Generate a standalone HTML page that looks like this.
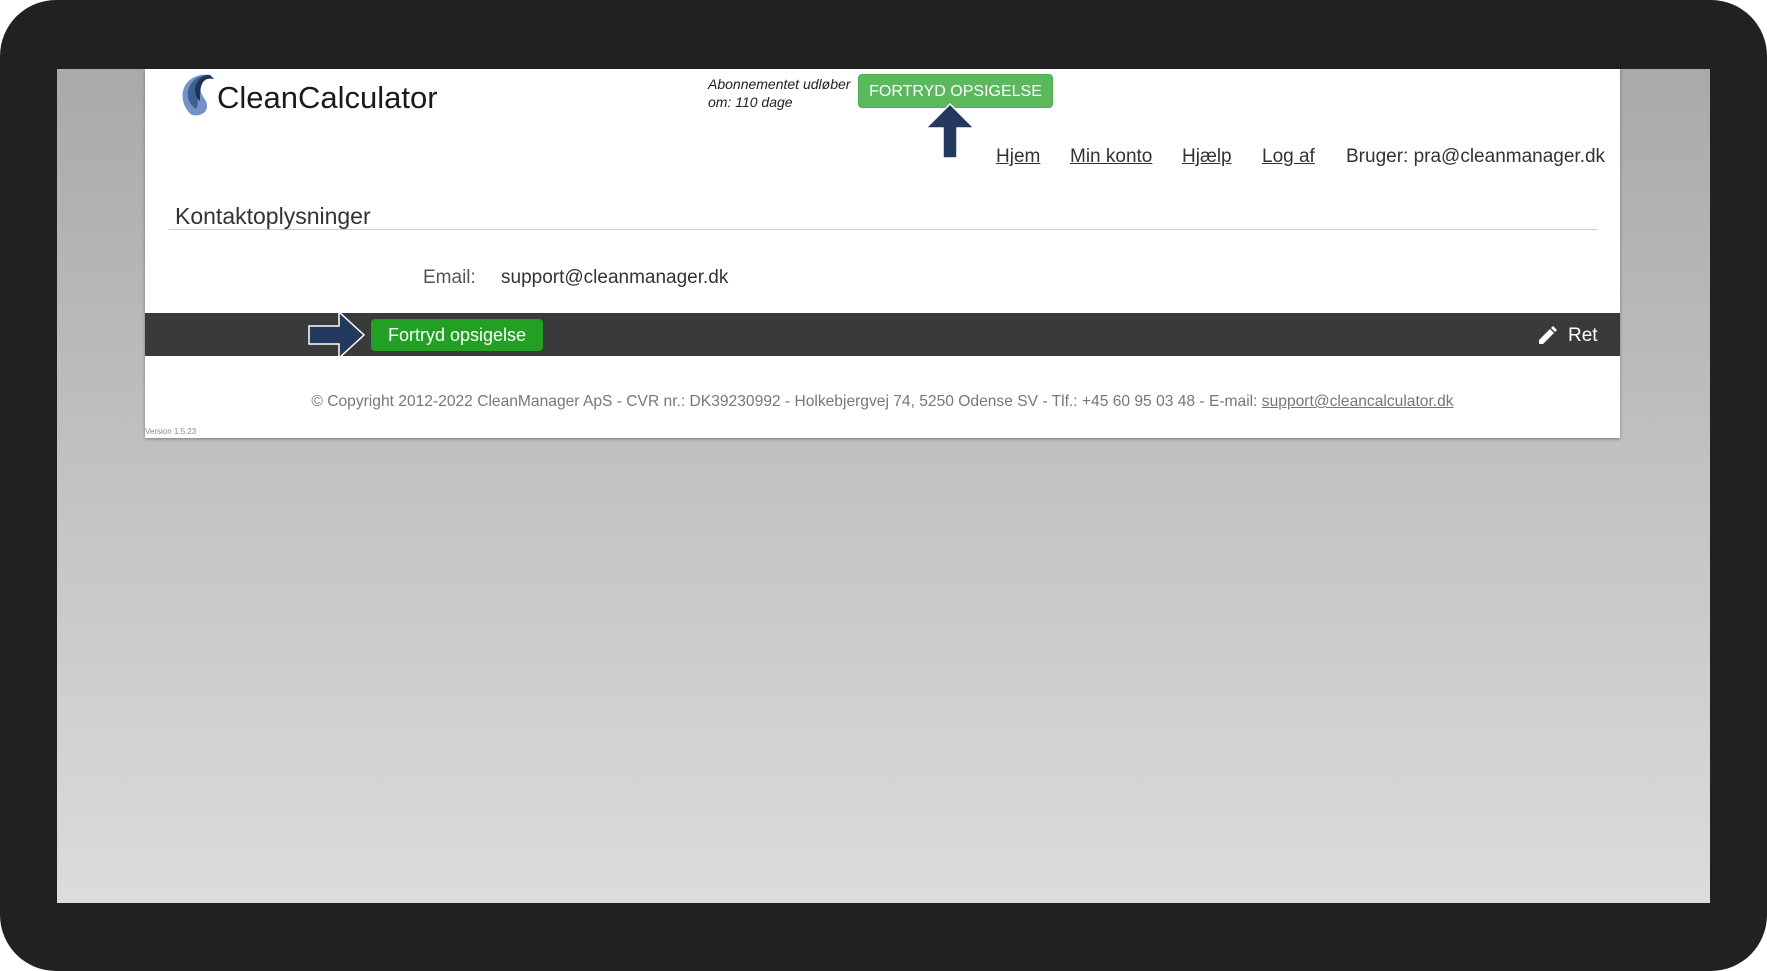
<!DOCTYPE html>
<html><head><meta charset="utf-8"><style>
*{margin:0;padding:0;box-sizing:border-box}
body{width:1767px;height:971px;background:#fff;position:relative;overflow:hidden;font-family:"Liberation Sans",sans-serif}
.frame{position:absolute;left:0;top:0;width:1767px;height:971px;background:#222122;border-radius:56px}
.gray{position:absolute;left:57px;top:69px;width:1653px;height:834px;background:linear-gradient(#a9a9a9,#dcdcdc)}
.card{position:absolute;left:145px;top:69px;width:1475px;height:369px;background:#fff;box-shadow:0 1px 3px rgba(0,0,0,.35)}
.a{position:absolute;white-space:nowrap}
.nav a{color:#333;text-decoration:underline;font-size:19px}
</style></head><body>
<div class="frame"></div>
<div class="gray"></div>
<div class="card"></div>
<svg class="a" style="left:180px;top:73px" width="36" height="44" viewBox="0 0 36 44">
<path d="M30 2 C18 0 6 6 3 18 C1 28 6 38 12 42 C22 44 30 38 26 28 C22 22 18 16 22 8 C24 5 28 4 34 6 Z" fill="#7393c8"/>
<path d="M30 2 C20 1 10 8 8 18 C7 26 10 32 16 36 C20 30 16 22 18 14 C20 8 26 5 34 6 Z" fill="#3f5f93"/>
<path d="M30 2 C22 2 16 8 15 16 C15 22 17 26 20 28 C20 20 20 12 24 8 C27 5 30 5 34 6 Z" fill="#1d3354"/>
</svg>
<div class="a" style="left:217px;top:80px;font-size:31px;color:#1a1a1a;font-weight:300">CleanCalculator</div>
<div class="a" style="left:708px;top:75px;font-size:14px;font-style:italic;color:#222;line-height:18px">Abonnementet udløber<br>om: 110 dage</div>
<div class="a" style="left:858px;top:74px;width:195px;height:34px;background:#5cb85c;border:1px solid #4cae4c;border-radius:4px;color:#fff;font-size:16px;text-align:center;line-height:34px">FORTRYD OPSIGELSE</div>
<svg class="a" style="left:924px;top:102px" width="52" height="58" viewBox="0 0 52 58"><path d="M26 2 L50 26 L33 26 L33 56 L19 56 L19 26 L2 26 Z" fill="#233a5e" stroke="#fff" stroke-width="1.5"/></svg>
<div class="a nav" style="left:996px;top:146px"><a>Hjem</a></div>
<div class="a nav" style="left:1070px;top:146px"><a>Min konto</a></div>
<div class="a nav" style="left:1182px;top:146px"><a>Hjælp</a></div>
<div class="a nav" style="left:1262px;top:146px"><a>Log af</a></div>
<div class="a" style="left:1346px;top:146px;font-size:19px;color:#333">Bruger: pra@cleanmanager.dk</div>
<div class="a" style="left:175px;top:203px;font-size:23px;color:#333">Kontaktoplysninger</div>
<div class="a" style="left:169px;top:229px;width:1428px;height:1px;background:#ccc"></div>
<div class="a" style="left:423px;top:267px;font-size:19px;color:#555">Email:</div>
<div class="a" style="left:501px;top:267px;font-size:19px;color:#333">support@cleanmanager.dk</div>
<div class="a" style="left:145px;top:313px;width:1475px;height:43px;background:#3a3a3a"></div>
<svg class="a" style="left:306px;top:310px" width="62" height="50" viewBox="0 0 62 50"><path d="M3 16 L33 16 L33 2 L58 25 L33 48 L33 34 L3 34 Z" fill="#233a5e" stroke="#fff" stroke-width="1.5"/></svg>
<div class="a" style="left:371px;top:319px;width:172px;height:32px;background:#22a023;border-radius:4px;color:#fff;font-size:18px;text-align:center;line-height:32px">Fortryd opsigelse</div>
<svg class="a" style="left:1538px;top:325px" width="20" height="20" viewBox="0 0 20 20"><path d="M1 15 L1 19 L5 19 L16 8 L12 4 Z M13 3 L15 1 L19 5 L17 7 Z" fill="#fff"/></svg>
<div class="a" style="left:1568px;top:325px;font-size:19px;color:#fff">Ret</div>
<div class="a" style="left:301px;top:393px;width:1163px;text-align:center;font-size:15.6px;color:#777">© Copyright 2012-2022 CleanManager ApS - CVR nr.: DK39230992 - Holkebjergvej 74, 5250 Odense SV - Tlf.: +45 60 95 03 48 - E-mail: <u>support@cleancalculator.dk</u></div>
<div class="a" style="left:145px;top:427px;font-size:8px;color:#888">Version 1.5.23</div>
</body></html>
